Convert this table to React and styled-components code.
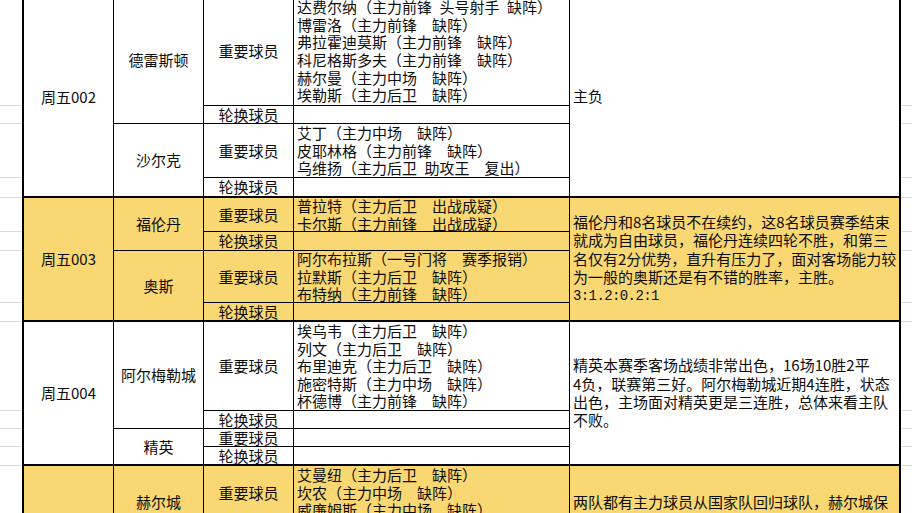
import React from "react";
import styled, { createGlobalStyle } from "styled-components";

const YELLOW = "#f9d773";
const H = "\u2002"; // half-width gap
const F = "\u3000"; // full-width gap

const games = [
  {
    date: "周五002",
    color: "#ffffff",
    note: ["主负"],
    teams: [
      {
        name: "德雷斯顿",
        rows: [
          {
            label: "重要球员",
            h: 108,
            players: [
              `达费尔纳（主力前锋${H}头号射手${H}缺阵）`,
              `博雷洛（主力前锋${F}缺阵）`,
              `弗拉霍迪莫斯（主力前锋${F}缺阵）`,
              `科尼格斯多夫（主力前锋${F}缺阵）`,
              `赫尔曼（主力中场${F}缺阵）`,
              `埃勒斯（主力后卫${F}缺阵）`,
            ],
          },
          { label: "轮换球员", h: 17, players: [] },
        ],
      },
      {
        name: "沙尔克",
        rows: [
          {
            label: "重要球员",
            h: 53,
            players: [
              `艾丁（主力中场${F}缺阵）`,
              `皮耶林格（主力前锋${F}缺阵）`,
              `乌维扬（主力后卫${H}助攻王${F}复出）`,
            ],
          },
          { label: "轮换球员", h: 18, players: [] },
        ],
      },
    ],
  },
  {
    date: "周五003",
    color: YELLOW,
    note: [
      "福伦丹和8名球员不在续约，这8名球员赛季结束",
      "就成为自由球员，福伦丹连续四轮不胜，和第三",
      "名仅有2分优势，直升有压力了，面对客场能力较",
      "为一般的奥斯还是有不错的胜率，主胜。",
    ],
    ratio: "3:1.2:0.2:1",
    teams: [
      {
        name: "福伦丹",
        rows: [
          {
            label: "重要球员",
            h: 33,
            players: [
              `普拉特（主力后卫${F}出战成疑）`,
              `卡尔斯（主力前锋${F}出战成疑）`,
            ],
          },
          { label: "轮换球员", h: 18, players: [] },
        ],
      },
      {
        name: "奥斯",
        rows: [
          {
            label: "重要球员",
            h: 51,
            players: [
              `阿尔布拉斯（一号门将${F}赛季报销）`,
              `拉默斯（主力后卫${F}缺阵）`,
              `布特纳（主力前锋${F}缺阵）`,
            ],
          },
          { label: "轮换球员", h: 17, players: [] },
        ],
      },
    ],
  },
  {
    date: "周五004",
    color: "#ffffff",
    note: [
      "精英本赛季客场战绩非常出色，16场10胜2平",
      "4负，联赛第三好。阿尔梅勒城近期4连胜，状态",
      "出色，主场面对精英更是三连胜，总体来看主队",
      "不败。",
    ],
    teams: [
      {
        name: "阿尔梅勒城",
        rows: [
          {
            label: "重要球员",
            h: 88,
            players: [
              `埃乌韦（主力后卫${F}缺阵）`,
              `列文（主力后卫${F}缺阵）`,
              `布里迪克（主力后卫${F}缺阵）`,
              `施密特斯（主力中场${F}缺阵）`,
              `杯德博（主力前锋${F}缺阵）`,
            ],
          },
          { label: "轮换球员", h: 17, players: [] },
        ],
      },
      {
        name: "精英",
        rows: [
          { label: "重要球员", h: 17, players: [] },
          { label: "轮换球员", h: 17, players: [] },
        ],
      },
    ],
  },
  {
    date: "周五005",
    color: YELLOW,
    note: ["两队都有主力球员从国家队回归球队，赫尔城保"],
    notePad: 27,
    teams: [
      {
        name: "赫尔城",
        rows: [
          {
            label: "重要球员",
            h: 53,
            players: [
              `艾曼纽（主力后卫${F}缺阵）`,
              `坎农（主力中场${F}缺阵）`,
              `威廉姆斯（主力中场${F}缺阵）`,
            ],
          },
          { label: "轮换球员", h: 18, players: [] },
        ],
      },
      {
        name: "",
        rows: [
          { label: "重要球员", h: 53, players: [] },
          { label: "轮换球员", h: 18, players: [] },
        ],
      },
    ],
  },
];

const GlobalStyle = createGlobalStyle`
  html, body {
    margin: 0;
    padding: 0;
    background: #fff;
    overflow: hidden;
  }
  body {
    font-family: "Noto Sans CJK SC", "Noto Sans", sans-serif;
    color: #0d0d0d;
  }
`;

const Page = styled.div`
  display: flex;
  align-items: flex-start;
  margin-top: -3px;
`;

const Gutter = styled.div`
  display: flex;
  flex-direction: column;
  width: ${(p) => p.$w}px;
  flex-shrink: 0;
`;

const GutterCell = styled.div`
  height: ${(p) => p.$h}px;
  border-bottom: 1px solid #dcdcdc;
`;

const Table = styled.div`
  display: flex;
  flex-direction: column;
`;

const Block = styled.div`
  display: grid;
  grid-template-columns: 89px 89px 89px 275px 329px;
  grid-template-rows: ${(p) => p.$rows};
  gap: 1px;
  background: #000;
  border-left: 2px solid #000;
  border-right: 2px solid #000;
  border-bottom: 2px solid #000;
`;

const Cell = styled.div`
  background: ${(p) => p.$bg};
  display: flex;
  align-items: center;
  justify-content: center;
  font-size: 15px;
  line-height: 18px;
  white-space: nowrap;
`;

const DateCell = styled(Cell)`
  grid-column: 1;
  grid-row: 1 / -1;
`;

const TeamCell = styled(Cell)`
  grid-column: 2;
  grid-row: ${(p) => p.$row} / span ${(p) => p.$span};
`;

const LabelCell = styled(Cell)`
  grid-column: 3;
  grid-row: ${(p) => p.$row};
`;

const PlayersCell = styled(Cell)`
  grid-column: 4;
  grid-row: ${(p) => p.$row};
  flex-direction: column;
  align-items: flex-start;
  padding-left: 3px;
  line-height: 17.6px;
`;

const Player = styled.div`
  white-space: pre;
`;

const NoteCell = styled(Cell)`
  grid-column: 5;
  grid-row: 1 / -1;
  flex-direction: column;
  align-items: flex-start;
  justify-content: ${(p) => (p.$pad ? "flex-start" : "center")};
  padding: ${(p) => p.$pad || 0}px 0 0 3px;
  line-height: ${(p) => p.$lh}px;
`;

const NoteLine = styled.div`
  white-space: pre;
`;

const Ratio = styled.div`
  font-family: "Liberation Mono", "DejaVu Sans Mono", monospace;
  font-size: 14px;
  letter-spacing: -0.6px;
`;

function GameBlock({ game }) {
  const allRows = game.teams.flatMap((t) => t.rows);
  let rowIndex = 1;
  const cells = [];
  game.teams.forEach((team, ti) => {
    cells.push(
      <TeamCell key={`t${ti}`} $bg={game.color} $row={rowIndex} $span={team.rows.length}>
        {team.name}
      </TeamCell>
    );
    team.rows.forEach((row, ri) => {
      cells.push(
        <LabelCell key={`l${ti}-${ri}`} $bg={game.color} $row={rowIndex}>
          {row.label}
        </LabelCell>,
        <PlayersCell key={`p${ti}-${ri}`} $bg={game.color} $row={rowIndex}>
          {row.players.map((p) => (
            <Player key={p}>{p}</Player>
          ))}
        </PlayersCell>
      );
      rowIndex += 1;
    });
  });

  return (
    <Block $rows={allRows.map((r) => `${r.h}px`).join(" ")}>
      <DateCell $bg={game.color}>{game.date}</DateCell>
      {cells}
      <NoteCell $bg={game.color} $pad={game.notePad} $lh={game.ratio ? 18.5 : 18.3}>
        {game.note.map((line) => (
          <NoteLine key={line}>{line}</NoteLine>
        ))}
        {game.ratio && <Ratio>{game.ratio}</Ratio>}
      </NoteCell>
    </Block>
  );
}

function SideGutter({ width }) {
  const cells = [];
  games.forEach((g, gi) => {
    const rows = g.teams.flatMap((t) => t.rows);
    rows.forEach((r, ri) => {
      cells.push(<GutterCell key={`${gi}-${ri}`} $h={ri === rows.length - 1 ? r.h + 1 : r.h} />);
    });
  });
  return <Gutter $w={width}>{cells}</Gutter>;
}

export default function App() {
  return (
    <>
      <GlobalStyle />
      <Page>
        <SideGutter width={22} />
        <Table>
          {games.map((g) => (
            <GameBlock key={g.date} game={g} />
          ))}
        </Table>
        <SideGutter width={11} />
      </Page>
    </>
  );
}
